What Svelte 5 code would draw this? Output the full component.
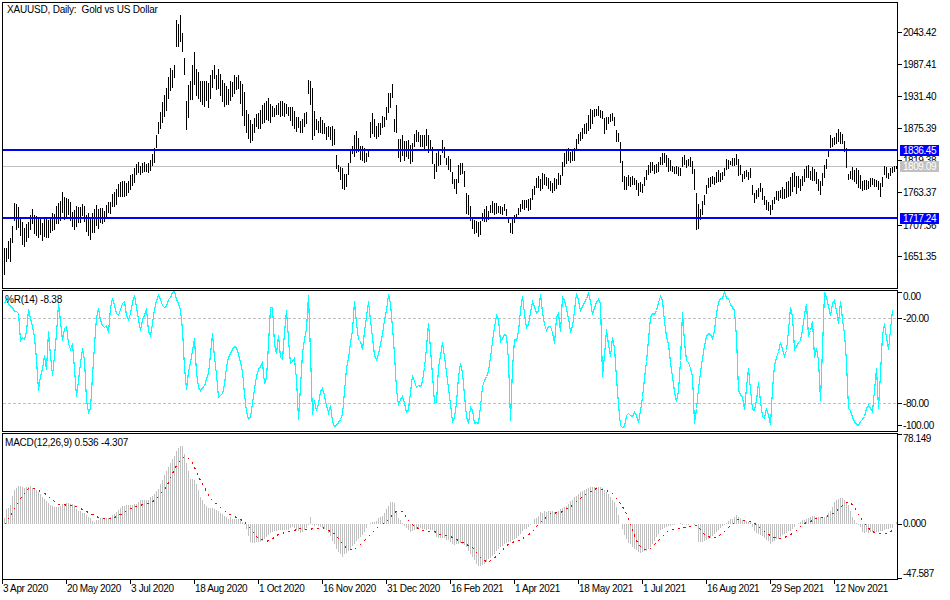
<script>
  // all chart data is in page pixels, the svg viewBoxes line up with the page
  const priceKeys = [[4,245,282],[6,243,262],[10,234,262],[12,215,243],[14,201,230],[20,210,240],[24,228,252],[30,207,232],[36,213,237],[42,215,245],[48,218,240],[56,204,228],[62,191,224],[68,198,222],[74,206,232],[82,203,222],[90,213,245],[96,205,232],[104,208,225],[112,190,210],[120,180,200],[128,178,195],[136,162,180],[142,162,175],[150,160,172],[154,147,165],[156,130,150],[158,115,135],[160,110,135],[164,88,118],[168,68,105],[174,65,82],[176,17,50],[180,14,48],[183,40,58],[186,85,135],[190,75,108],[194,48,100],[200,80,108],[208,80,112],[212,70,100],[214,61,83],[220,70,105],[226,85,110],[232,75,100],[238,73,95],[243,82,125],[247,107,143],[252,120,143],[256,113,128],[262,105,130],[268,98,125],[274,105,120],[280,98,118],[288,105,118],[292,105,137],[298,115,130],
    [301,120,135],[306,108,128],[308,78,95],[312,77,143],[315,120,135],[320,115,135],[325,125,140],[330,122,142],[332,126,150],[334,128,153],[335,150,172],[338,162,172],[341,162,187],[344,170,192],[347,170,186],[349,152,168],[352,145,158],[354,132,157],[357,128,153],[362,145,165],[368,150,162],[370,117,140],[373,110,137],[376,125,143],[380,118,138],[385,110,125],[388,89,113],[392,80,103],[394,115,135],[396,103,150],[398,138,165],[402,135,162],[405,140,165],[412,140,165],[415,128,148],[420,135,150],[424,135,153],[426,128,153],[430,137,155],[434,155,180],[438,148,168],[440,153,166],[442,139,155],[446,155,165],[450,156,178],[453,175,189],[456,177,195],[458,163,184],[462,162,175],[463,163,183],[466,185,217],[468,193,217],[471,207,225],[473,217,235],[477,220,241],[479,219,241],[482,213,225],[486,205,230],[489,207,217],[493,198,216],[497,203,214],[502,205,216],[505,203,217],[509,218,225],[511,218,241],[514,215,225],[517,209,217],[520,203,213],[524,195,210],[529,200,215],[532,188,202],[536,177,192],[541,172,192],[546,173,188],[550,178,193],[552,180,197],[557,172,190],[560,172,188],[562,161,182],[565,146,165],[569,146,162],[572,148,167],[575,145,160],[577,132,147],[580,128,142],[585,120,135],[590,108,131],[595,108,120],[598,104,117],[602,109,119],[604,115,139],[608,113,125],[613,112,123],[616,127,146],[618,132,146],
    [620,135,170],[622,157,191],[624,173,194],[630,174,187],[635,177,187],[638,183,199],[642,181,196],[644,175,187],[648,163,177],[653,161,176],[658,161,173],[662,152,167],[665,152,167],[668,157,175],[673,165,175],[680,165,177],[683,152,167],[687,160,168],[691,153,168],[694,168,196],[696,193,238],[700,205,222],[704,195,210],[707,177,190],[712,175,185],[715,177,187],[717,167,182],[722,172,182],[726,158,172],[730,160,168],[735,152,167],[738,156,177],[742,170,182],[747,169,182],[750,167,180],[753,190,203],[757,190,205],[760,178,192],[763,193,207],[768,202,213],[771,202,217],[775,190,200],[780,188,202],[785,182,200],[790,172,197],[795,170,195],[800,178,192],[805,163,182],[810,165,182],[815,170,188],[820,173,196],[824,162,181],[827,156,165],[830,132,148],[835,132,145],[838,127,144],[843,132,146],[846,143,170],[848,173,182],[853,163,183],[858,167,188],[862,180,194],[867,178,190],[872,176,187],[877,177,188],[880,180,198],[883,172,186],[884,163,178],[888,170,180],[893,165,173],[896,164,169]];

  const wprKeys = [[3,309],[5,298],[10,307],[15,310],[18,313],[20,342],[23,335],[25,340],[28,308],[32,328],[35,342],[38,388],[45,352],[47,387],[48,332],[52,375],[55,345],[58,305],[62,340],[65,318],[69,353],[72,342],[76,395],[83,342],[86,402],[87,415],[90,408],[93,362],[97,305],[102,327],[105,325],[108,333],[111,297],[117,315],[124,300],[127,322],[134,295],[140,328],[146,307],[149,340],[157,292],[164,307],[174,291],[180,308],[183,338],[185,398],[188,372],[194,338],[197,388],[203,388],[208,372],[212,335],[218,395],[222,395],[227,362],[232,347],[236,345],[242,372],[247,423],[250,418],[255,378],[262,362],[265,395],[271,292],[275,360],[278,333],[281,372],[286,310],[290,363],[295,360],[298,417],
    [303,335],[305,345],[308,295],[312,415],[313,398],[317,413],[321,384],[328,411],[330,406],[333,425],[336,425],[342,416],[345,375],[352,331],[354,301],[357,338],[360,340],[362,350],[368,301],[375,365],[382,335],[388,295],[389,291],[395,365],[397,408],[402,395],[405,405],[407,420],[412,375],[417,388],[423,381],[428,323],[431,361],[435,418],[438,368],[442,343],[446,370],[448,388],[452,421],[455,415],[459,360],[463,378],[465,416],[468,423],[471,400],[473,423],[478,425],[482,385],[488,373],[493,333],[497,310],[500,340],[507,332],[510,420],[513,340],[517,338],[522,295],[527,336],[529,313],[533,300],[537,315],[540,296],[545,331],[551,323],[554,345],[557,301],[560,333],[562,298],[567,310],[571,336],[576,293],[581,311],[588,291],[592,313],[597,298],
    [600,302],[602,378],[606,331],[610,355],[613,330],[617,391],[620,423],[624,428],[627,411],[632,416],[635,411],[638,421],[643,391],[650,318],[655,311],[661,293],[665,328],[668,345],[675,398],[677,406],[680,361],[682,310],[685,355],[689,365],[692,378],[694,423],[698,388],[703,348],[707,333],[713,338],[717,305],[724,293],[732,308],[735,311],[738,388],[742,398],[744,411],[748,366],[753,420],[758,383],[763,423],[766,406],[770,423],[773,371],[777,353],[780,343],[785,360],[791,296],[794,351],[800,340],[806,303],[808,335],[812,323],[814,358],[817,343],[820,401],[824,291],[830,315],[833,296],[838,321],[840,303],[845,338],[848,408],[857,425],[862,421],[867,403],[872,410],[876,366],[878,408],[883,315],[888,348],[891,318],[893,303]];

  const histKeys = [[3,525],[5,510],[10,505],[13,492],[17,487],[18,485],[23,488],[30,487],[37,490],[43,498],[50,505],[57,507],[67,502],[73,505],[80,512],[87,515],[93,523],[100,518],[107,518],[113,515],[120,508],[127,505],[133,505],[140,501],[147,500],[157,491],[163,478],[170,463],[177,450],[179,446],[182,446],[185,458],[190,480],[195,480],[200,497],[207,508],[213,508],[220,513],[227,518],[233,518],[240,520],[245,525],[250,543],[257,542],[263,540],[270,533],[277,530],[287,530],[293,527],[300,533],[307,527],[310,518],[312,525],[320,527],[327,530],[333,542],[338,553],[342,557],[347,552],[353,545],[363,533],[368,524],[373,522],[383,515],[390,503],[394,503],[398,517],[405,527],[410,532],[417,528],[433,530],[436,538],[443,537],[453,545],[460,543],[467,548],[473,560],[479,567],[485,563],[492,555],[500,547],[508,542],[517,538],[523,530],[532,524],[535,518],[540,513],[545,511],[557,512],[565,507],[570,502],[577,495],[583,490],[590,487],[600,487],[607,493],[615,503],[620,524],[624,535],[628,542],[633,548],[640,553],[647,550],[653,543],[660,530],[667,527],[674,524],[696,524],[698,542],[703,542],[713,535],[720,528],[727,522],[736,515],[743,520],[750,522],[754,532],[763,537],[770,543],[780,537],[790,530],[797,524],[807,518],[813,516],[823,518],[830,512],[835,500],[842,498],[848,505],[853,520],[858,524],[862,532],[873,533],[883,530],[892,527],[896,523]];

  const signalKeys = [[3,525],[13,510],[22,495],[28,488],[35,488],[45,493],[57,504],[75,505],[88,512],[100,518],[113,518],[130,508],[153,501],[165,488],[177,463],[185,455],[192,462],[200,480],[210,498],[227,513],[243,520],[258,538],[267,541],[280,533],[300,528],[307,529],[323,527],[333,532],[347,549],[355,549],[367,537],[377,527],[387,520],[395,511],[402,511],[408,520],[415,527],[423,530],[433,531],[440,534],[453,537],[463,542],[473,548],[480,557],[488,562],[497,555],[507,544],[520,539],[530,533],[540,522],[550,513],[560,512],[573,504],[587,492],[597,488],[610,491],[620,503],[627,515],[630,525],[637,543],[643,549],[650,548],[660,538],[668,530],[680,527],[697,525],[703,533],[710,537],[717,537],[727,528],[737,519],[750,521],[757,525],[763,530],[773,537],[782,538],[793,533],[803,523],[817,518],[830,515],[840,507],[847,501],[852,504],[860,517],[867,527],[875,533],[887,533],[893,529]];

  let seed = 7;
  function rnd() {
    seed = (seed * 1103515245 + 12345) & 0x7fffffff;
    return seed / 0x7fffffff - 0.5;
  }

  function at(keys, x, col) {
    let i = 0;
    while (i < keys.length - 2 && keys[i + 1][0] < x) i++;
    const a = keys[i], b = keys[i + 1];
    const t = Math.max(0, Math.min(1, (x - a[0]) / (b[0] - a[0])));
    return a[col] + (b[col] - a[col]) * t;
  }

  const xs = [];
  for (let x = 4; x <= 896; x += 2) xs.push(x);

  // keys are the envelope of a few bars, a single bar is a bit shorter than that
  const priceBars = xs.map((x) => {
    const top = at(priceKeys, x, 1);
    const bottom = at(priceKeys, x, 2);
    const len = (bottom - top) * (0.72 + rnd() * 0.3);
    const start = top + (bottom - top - len) * (0.5 + rnd());
    return `M${x + 0.5} ${Math.round(start)}V${Math.round(start + len)}`;
  }).join('');

  const wprLine = xs.filter((x) => x <= 893).map((x) => {
    const y = Math.round(at(wprKeys, x, 1) + rnd() * 5);
    return `${x + 0.5},${Math.max(291, Math.min(428, y)) + 0.5}`;
  }).join(' ');

  const histBars = xs.map((x) => {
    const y = Math.round(at(histKeys, x, 1) + rnd() * 1.5);
    return `M${x + 0.5} 524V${y}`;
  }).join('');

  const signalLine = xs.filter((x) => x <= 893).map((x) => `${x + 0.5},${Math.round(at(signalKeys, x, 1)) + 0.5}`).join(' ');

  const priceTicks = [[32, '2043.42'], [64, '1987.41'], [96, '1931.40'], [128, '1875.39'], [160, '1819.38'], [192, '1763.37'], [225, '1707.36'], [256, '1651.35']];
  const priceTags = [[150, '1836.45', 'blue'], [166, '1809.09', 'silver'], [218, '1717.24', 'blue']];
  const wprTicks = [[292, 296, '0.00'], [318, 318, '-20.00'], [403, 403, '-80.00'], [425, 425, '-100.00']];
  const macdTicks = [[434, 438, '78.149'], [524, 523, '0.000'], [578, 573, '-47.587']];
  const dates = [[2, '3 Apr 2020'], [66, '20 May 2020'], [130, '3 Jul 2020'], [194, '18 Aug 2020'], [258, '1 Oct 2020'], [322, '16 Nov 2020'], [386, '31 Dec 2020'], [450, '16 Feb 2021'], [514, '1 Apr 2021'], [578, '18 May 2021'], [642, '1 Jul 2021'], [706, '16 Aug 2021'], [770, '29 Sep 2021'], [834, '12 Nov 2021']];
</script>

<div class="terminal">
  <div class="row price">
    <div class="plot">
      <svg viewBox="3 3 894 285" width="894" height="285">
        <line class="silver-line" x1="3" x2="897" y1="166.5" y2="166.5" />
        <path class="bars" d={priceBars} />
        <line class="level" x1="3" x2="897" y1="150" y2="150" />
        <line class="level" x1="3" x2="897" y1="218" y2="218" />
        <text class="legend" x="7" y="13">XAUUSD, Daily:  Gold vs US Dollar</text>
      </svg>
    </div>
    <svg class="axis" viewBox="898 2 52 287" width="52" height="287">
      {#each priceTicks as [y, label]}
        <line class="tick" x1="898" x2="902" y1={y + 0.5} y2={y + 0.5} />
        <text class="label" x="903" y={y + 4}>{label}</text>
      {/each}
      {#each priceTags as [y, label, tone]}
        <rect class="tag {tone}" x="900" y={y - 5} width="39" height="11" />
        <text class="label tag-text" x="903" y={y + 4}>{label}</text>
      {/each}
    </svg>
  </div>

  <div class="row wpr">
    <div class="plot">
      <svg viewBox="3 291 894 140" width="894" height="140">
        <line class="dash" x1="3" x2="897" y1="318.5" y2="318.5" />
        <line class="dash" x1="3" x2="897" y1="403.5" y2="403.5" />
        <polyline class="wpr-line" points={wprLine} />
        <text class="legend" x="5" y="303">%R(14) -8.38</text>
      </svg>
    </div>
    <svg class="axis" viewBox="898 290 52 142" width="52" height="142">
      {#each wprTicks as [y, ty, label]}
        <line class="tick" x1="898" x2="902" y1={y + 0.5} y2={y + 0.5} />
        <text class="label" x="903" y={ty + 4}>{label}</text>
      {/each}
    </svg>
  </div>

  <div class="row macd">
    <div class="plot">
      <svg viewBox="3 434 894 145" width="894" height="145">
        <path class="hist" d={histBars} />
        <polyline class="signal" points={signalLine} />
        <text class="legend" x="5" y="446">MACD(12,26,9) 0.536 -4.307</text>
      </svg>
    </div>
    <svg class="axis" viewBox="898 433 52 147" width="52" height="147">
      {#each macdTicks as [y, ty, label]}
        <line class="tick" x1="898" x2="902" y1={y + 0.5} y2={y + 0.5} />
        <text class="label" x="903" y={ty + 4}>{label}</text>
      {/each}
    </svg>
  </div>

  <svg class="dates" viewBox="0 580 950 20" width="950" height="20">
    {#each dates as [x, label]}
      <line class="tick" x1={x + 0.5} x2={x + 0.5} y1="580" y2="584" />
      <text class="date" x={x + 1} y="592">{label}</text>
    {/each}
  </svg>
</div>

<style>
  :global(body) {
    margin: 0;
    background: #fff;
  }

  .terminal {
    display: flex;
    flex-direction: column;
    width: 950px;
    height: 600px;
    padding-top: 2px;
    box-sizing: border-box;
    overflow: hidden;
  }

  .row {
    display: flex;
    margin-left: 2px;
    margin-bottom: 1px;
  }

  .row.macd {
    margin-bottom: 0;
  }

  .plot {
    border: 1px solid #000;
    line-height: 0;
  }

  svg {
    display: block;
    shape-rendering: crispEdges;
  }

  .dates {
    flex: none;
  }

  text {
    font-family: "Liberation Sans", sans-serif;
    font-size: 10px;
    fill: #000;
    white-space: pre;
    shape-rendering: auto;
  }

  .legend {
    letter-spacing: -0.2px;
  }

  .label {
    letter-spacing: -0.45px;
  }

  .date {
    letter-spacing: -0.35px;
  }

  .bars {
    stroke: #000;
    stroke-width: 1;
    fill: none;
  }

  .level {
    stroke: #0000ff;
    stroke-width: 2;
  }

  .silver-line,
  .hist {
    stroke: #c0c0c0;
    stroke-width: 1;
    fill: none;
  }

  .dash {
    stroke: #c0c0c0;
    stroke-width: 1;
    stroke-dasharray: 3 2;
  }

  .wpr-line {
    fill: none;
    stroke: #00ffff;
    stroke-width: 1.15;
  }

  .signal {
    fill: none;
    stroke: #ff0000;
    stroke-width: 1;
    stroke-dasharray: 2 4;
  }

  .tick {
    stroke: #000;
    stroke-width: 1;
  }

  .tag.blue {
    fill: #0000ff;
  }

  .tag.silver {
    fill: #c0c0c0;
  }

  .tag-text {
    fill: #fff;
  }
</style>
